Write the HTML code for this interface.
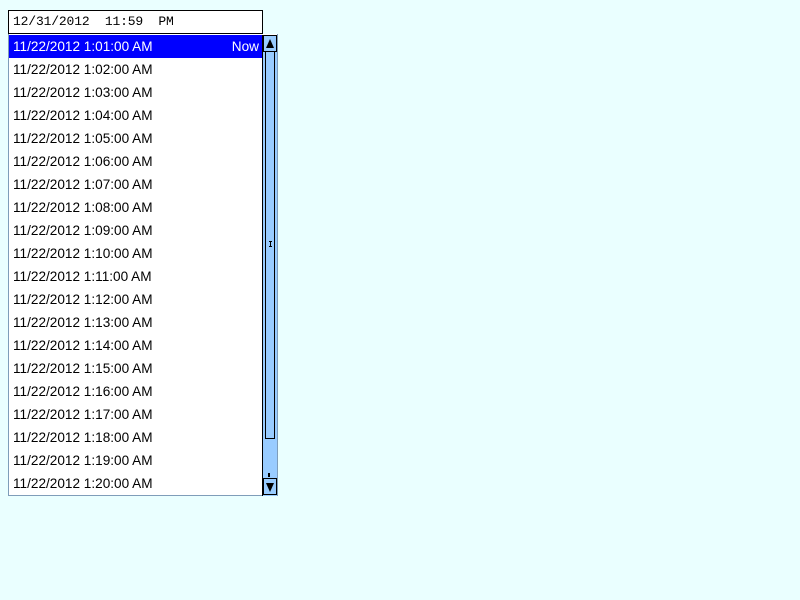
<!DOCTYPE html><html><head><style>
body{margin:0;background:#eaffff;width:800px;height:600px;position:relative;overflow:hidden;font-family:"Liberation Sans",sans-serif}
.inp{position:absolute;left:8px;top:10px;height:22px;border:1px solid #000;background:#fff;font:13px "Liberation Mono",monospace;line-height:22px;padding-left:4px;width:249px;white-space:pre;letter-spacing:-0.15px}
.list{position:absolute;left:8px;top:34px;width:268px;height:461px;border:1px solid #7f9db9;border-top:none;background:#fff}
.row{position:absolute;left:0;width:254px;height:23px;font-size:13.6px;line-height:24px;padding-left:4px;color:#000;box-sizing:border-box}
.sel{background:#0000ff;color:#fff}
.sb{position:absolute;left:262px;top:35px;width:15px;height:461px;background:#99ccff;border-left:1px solid #000;box-sizing:border-box}
.btn{position:absolute;left:0;width:14px;height:17px;border:1px solid #000;box-sizing:border-box;background:#99ccff}
.thumb{position:absolute;left:2px;top:17px;width:10px;height:387px;border-left:1px solid #000;border-right:1px solid #000;border-bottom:1px solid #000;box-sizing:border-box;background:#99ccff}
</style></head><body>
<div class="inp">12/31/2012  11:59  PM</div>
<div class="list">
<div class="row sel" style="top:1px">11/22/2012 1:01:00 AM<span style="position:absolute;right:4px">Now</span></div>
<div class="row" style="top:24px">11/22/2012 1:02:00 AM</div>
<div class="row" style="top:47px">11/22/2012 1:03:00 AM</div>
<div class="row" style="top:70px">11/22/2012 1:04:00 AM</div>
<div class="row" style="top:93px">11/22/2012 1:05:00 AM</div>
<div class="row" style="top:116px">11/22/2012 1:06:00 AM</div>
<div class="row" style="top:139px">11/22/2012 1:07:00 AM</div>
<div class="row" style="top:162px">11/22/2012 1:08:00 AM</div>
<div class="row" style="top:185px">11/22/2012 1:09:00 AM</div>
<div class="row" style="top:208px">11/22/2012 1:10:00 AM</div>
<div class="row" style="top:231px">11/22/2012 1:11:00 AM</div>
<div class="row" style="top:254px">11/22/2012 1:12:00 AM</div>
<div class="row" style="top:277px">11/22/2012 1:13:00 AM</div>
<div class="row" style="top:300px">11/22/2012 1:14:00 AM</div>
<div class="row" style="top:323px">11/22/2012 1:15:00 AM</div>
<div class="row" style="top:346px">11/22/2012 1:16:00 AM</div>
<div class="row" style="top:369px">11/22/2012 1:17:00 AM</div>
<div class="row" style="top:392px">11/22/2012 1:18:00 AM</div>
<div class="row" style="top:415px">11/22/2012 1:19:00 AM</div>
<div class="row" style="top:438px">11/22/2012 1:20:00 AM</div>
</div>
<div class="sb">
<div class="btn" style="top:0"><svg width="12" height="15"><path d="M2 12 L6 3 L10 12Z" fill="#000"/></svg></div>
<div class="thumb">
<div style="position:absolute;left:3px;top:189px;width:3px;height:1px;background:#000"></div>
<div style="position:absolute;left:4px;top:189px;width:1px;height:6px;background:#000"></div>
<div style="position:absolute;left:3px;top:194px;width:3px;height:1px;background:#000"></div></div>
<div style="position:absolute;left:5px;top:438px;width:2px;height:4px;background:#000"></div>
<div class="btn" style="top:443px"><svg width="12" height="15"><path d="M2 4 L10 4 L6 13Z" fill="#000"/></svg></div>
</div>
</body></html>
